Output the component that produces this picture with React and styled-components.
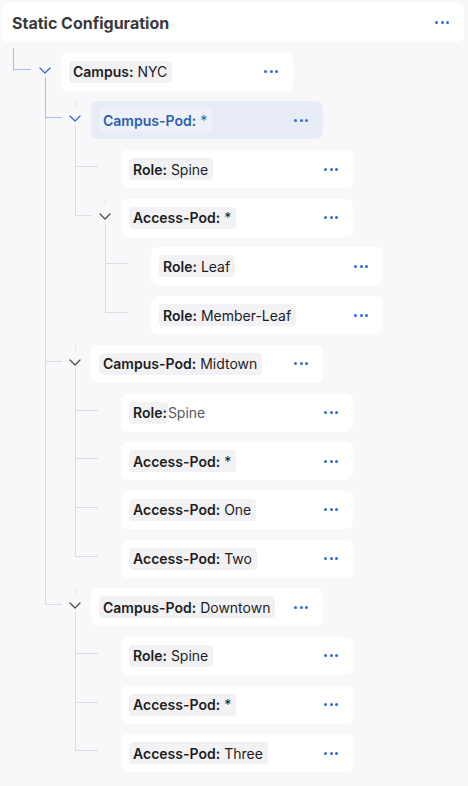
import React from "react";
import styled, { createGlobalStyle, css } from "styled-components";

const GAP = 10.7;
const ROW_H = 38;
const CONN = GAP + 17;

const colors = {
  page: "#f8f8fa",
  card: "#ffffff",
  chip: "#f2f2f4",
  selectedCard: "#e7ecf6",
  selectedChip: "#eef1f8",
  text: "#1d1d1f",
  value: "#2f2f31",
  muted: "#58585c",
  blue: "#2d5fb2",
  dots: "#3469d4",
  line: "#dcdce0",
  lineActive: "#a9bfe8",
};

const tree = {
  label: "Campus",
  value: "NYC",
  active: true,
  children: [
    {
      label: "Campus-Pod",
      value: "*",
      active: true,
      selected: true,
      children: [
        { label: "Role", value: "Spine" },
        {
          label: "Access-Pod",
          value: "*",
          children: [
            { label: "Role", value: "Leaf" },
            { label: "Role", value: "Member-Leaf" },
          ],
        },
      ],
    },
    {
      label: "Campus-Pod",
      value: "Midtown",
      children: [
        { label: "Role", value: "Spine", tight: true },
        { label: "Access-Pod", value: "*" },
        { label: "Access-Pod", value: "One" },
        { label: "Access-Pod", value: "Two" },
      ],
    },
    {
      label: "Campus-Pod",
      value: "Downtown",
      children: [
        { label: "Role", value: "Spine" },
        { label: "Access-Pod", value: "*" },
        { label: "Access-Pod", value: "Three" },
      ],
    },
  ],
};

const MoreDots = () => (
  <Dots>
    <Dot />
    <Dot />
    <Dot />
  </Dots>
);

const Chevron = ({ active }) => (
  <svg width="12" height="7" viewBox="0 0 12 7" fill="none">
    <path
      d="M1 1l5 5 5-5"
      stroke={active ? colors.dots : "#4a4a4e"}
      strokeWidth="1.3"
      strokeLinecap="round"
      strokeLinejoin="round"
    />
  </svg>
);

const TreeNode = ({ node, root, last }) => {
  const hasChildren = node.children && node.children.length > 0;
  return (
    <Node $root={root} $last={last} $active={node.active} $toggle={hasChildren}>
      <Row>
        {hasChildren ? (
          <Toggle $root={root}>
            <Chevron active={node.active} />
          </Toggle>
        ) : (
          <Spacer />
        )}
        <Card $selected={node.selected}>
          {node.tight ? (
            <Entry>
              <Chip $selected={node.selected} $tight>
                <Key>{node.label}:</Key>
              </Chip>
              <Loose>{node.value}</Loose>
            </Entry>
          ) : (
            <Chip $selected={node.selected}>
              <Key>{node.label}:</Key>
              <Value>{node.value}</Value>
            </Chip>
          )}
          <MoreDots />
        </Card>
      </Row>
      {hasChildren && (
        <Children>
          {node.children.map((child, i) => (
            <TreeNode
              key={child.label + child.value + i}
              node={child}
              last={i === node.children.length - 1}
            />
          ))}
        </Children>
      )}
    </Node>
  );
};

const App = () => {
  return (
    <>
      <GlobalStyle />
      <Page>
        <Header>
          <Title>Static Configuration</Title>
          <MoreDots />
        </Header>
        <Tree>
          <TreeNode node={tree} root last />
        </Tree>
      </Page>
    </>
  );
};

export default App;

const GlobalStyle = createGlobalStyle`
  html, body {
    margin: 0;
    padding: 0;
    background: ${colors.page};
  }
  body {
    font-family: Inter, "Noto Sans", "Liberation Sans", sans-serif;
    -webkit-font-smoothing: antialiased;
  }
`;

const Page = styled.div`
  width: 468px;
  min-height: 786px;
  box-sizing: border-box;
  padding: 3px 4px 0 1px;
`;

const Header = styled.div`
  display: flex;
  align-items: center;
  justify-content: space-between;
  height: 39px;
  box-sizing: border-box;
  padding: 0 15px 0 11px;
  background: ${colors.card};
  border-radius: 7px;
`;

const Title = styled.span`
  font-size: 16px;
  font-weight: 650;
  color: #3a3a3c;
`;

const Tree = styled.ul`
  list-style: none;
  margin: 0;
  padding: 0 0 0 30px;
`;

const Children = styled.ul`
  list-style: none;
  margin: 0;
  padding: 0 0 0 30px;
`;

// tree connectors: L-shape into the row, plus the rail down to the next sibling
const Node = styled.li`
  position: relative;
  padding-top: ${GAP}px;

  &::before {
    content: "";
    position: absolute;
    left: ${(p) => (p.$root ? -18 : -16)}px;
    top: ${(p) => (p.$root ? 6 : -14)}px;
    height: ${(p) => CONN - (p.$root ? 6 : -14)}px;
    width: ${(p) => (p.$root ? 18 : p.$toggle ? 17 : 23)}px;
    box-sizing: border-box;
    border-left: 1.5px solid ${(p) => (p.$active ? colors.lineActive : colors.line)};
    border-bottom: 1.5px solid ${(p) => (p.$active ? colors.lineActive : colors.line)};
  }

  ${(p) =>
    !p.$last &&
    css`
      &::after {
        content: "";
        position: absolute;
        left: -16px;
        top: ${CONN}px;
        bottom: 0;
        border-left: 1.5px solid ${colors.line};
      }
    `}
`;

const Row = styled.div`
  display: flex;
  align-items: stretch;
  height: ${ROW_H}px;
`;

const Toggle = styled.div`
  position: relative;
  width: 30px;
  flex-shrink: 0;
  display: flex;
  justify-content: center;
  align-items: flex-start;
  box-sizing: border-box;
  padding: 14px 2px 0 0;

  ${(p) =>
    !p.$root &&
    css`
      &::before {
        content: "";
        position: absolute;
        left: 13.5px;
        top: 0;
        height: 6px;
        border-left: 1px solid #e6e6ea;
      }
    `}
`;

const Spacer = styled.div`
  width: 30px;
  flex-shrink: 0;
`;

const Card = styled.div`
  width: 232px;
  box-sizing: border-box;
  display: flex;
  align-items: center;
  justify-content: space-between;
  padding: 0 15px 0 8px;
  border-radius: 7px;
  background: ${(p) => (p.$selected ? colors.selectedCard : colors.card)};
  color: ${(p) => (p.$selected ? colors.blue : colors.text)};
`;

const Entry = styled.div`
  display: flex;
  align-items: center;
`;

const Chip = styled.span`
  display: inline-flex;
  align-items: center;
  height: 22px;
  padding: ${(p) => (p.$tight ? "0 1px 0 4px" : "0 5px 0 4px")};
  border-radius: 4px;
  background: ${(p) => (p.$selected ? colors.selectedChip : colors.chip)};
  font-size: 14px;
  white-space: pre;
`;

const Key = styled.span`
  font-weight: 600;
`;

const Value = styled.span`
  font-weight: 400;
  margin-left: 4px;
  color: inherit;
`;

const Loose = styled.span`
  font-size: 14px;
  color: ${colors.muted};
`;

const Dots = styled.div`
  display: flex;
  gap: 2.5px;
`;

const Dot = styled.span`
  width: 3px;
  height: 3px;
  border-radius: 50%;
  background: ${colors.dots};
`;
